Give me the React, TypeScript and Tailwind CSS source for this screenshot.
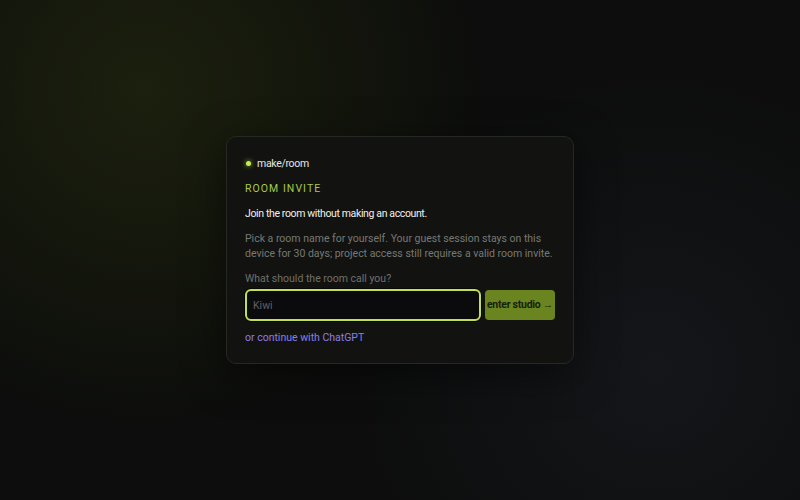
import { useState } from "react";

export default function App() {
  const [name, setName] = useState("");

  return (
    <main className="relative flex h-[500px] w-full items-center justify-center overflow-hidden bg-[#0c0d0c] font-['Roboto','Liberation_Sans',sans-serif]">
      {/* ambient glows */}
      <div className="pointer-events-none absolute inset-0 bg-[radial-gradient(circle_at_18%_18%,rgba(110,130,20,0.16),transparent_45%)]" />
      <div className="pointer-events-none absolute inset-0 bg-[radial-gradient(circle_at_82%_74%,rgba(70,76,110,0.14),transparent_40%)]" />

      <section className="relative w-[348px] rounded-[10px] border border-[#262824] bg-[#121311] px-[18px] pb-[18px] pt-[19px] shadow-[0_10px_40px_rgba(0,0,0,0.5)]">
        <div className="flex items-center gap-[6px] text-[10.5px] leading-[15px] tracking-[-0.03em] text-[#e6e6e2]">
          <span className="ml-[1px] h-[5px] w-[5px] rounded-full bg-[#c8f04a] shadow-[0_0_5px_rgba(200,240,74,0.8)]" />
          make/room
        </div>

        <h2 className="mt-[10px] text-[10.5px] font-normal uppercase leading-[15px] tracking-[0.1em] text-[#a9c94a]">
          Room invite
        </h2>

        <p className="mt-[10px] text-[10.5px] leading-[15px] tracking-[-0.035em] text-[#f0f0ec]">
          Join the room without making an account.
        </p>

        <p className="mt-[10px] text-[10.5px] leading-[15px] text-[#777873]">
          Pick a room name for yourself. Your guest session stays on this device for 30 days; project access still requires a valid room invite.
        </p>

        <label className="mt-[10px] block text-[10.5px] leading-[15px] text-[#6f706b]">
          What should the room call you?
        </label>

        <div className="mt-[3px] flex items-center gap-[4px]">
          <input
            value={name}
            onChange={(event) => setName(event.target.value)}
            placeholder="Kiwi"
            className="h-[32px] min-w-0 flex-1 rounded-[6px] border-2 border-[#c3df55] bg-[#0b0b0e] px-[6px] text-[10.5px] text-[#e6e6e2] outline-none placeholder:text-[#5f5f63] shadow-[0_0_0_1px_rgba(0,0,0,0.6)]"
          />
          <button
            type="button"
            className="flex h-[30px] w-[70px] items-center justify-center whitespace-nowrap rounded-[4px] bg-[#6a8520] text-[10.5px] font-bold tracking-[-0.025em] text-[#182008]"
          >
            enter studio →
          </button>
        </div>

        <button
          type="button"
          className="mt-[9px] block text-[10.5px] leading-[15px] text-[#8a7ee8]"
        >
          or continue with ChatGPT
        </button>
      </section>
    </main>
  );
}
